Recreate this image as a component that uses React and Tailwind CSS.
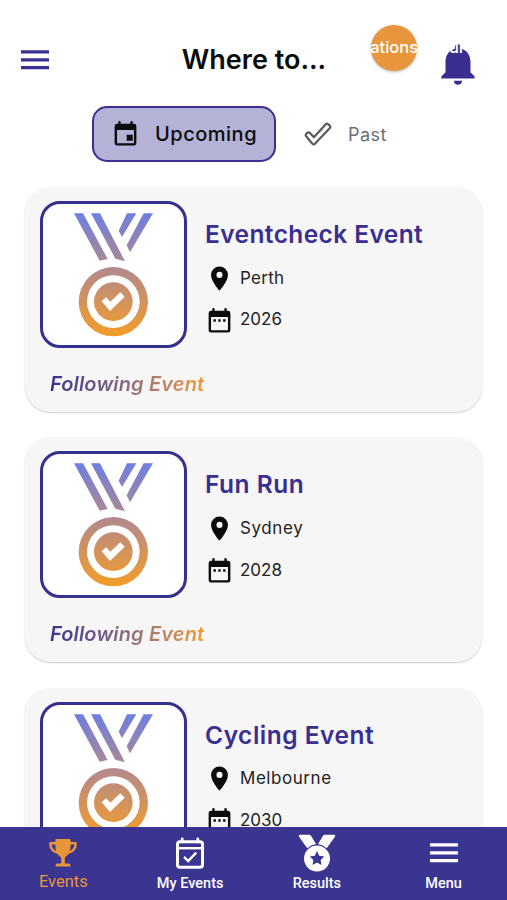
import React from 'react';

const events = [
  { id: 1, name: 'Eventcheck Event', city: 'Perth', year: '2026', nameClass: 'tracking-[0.4px]', cityClass: 'tracking-[0.3px]' },
  { id: 2, name: 'Fun Run', city: 'Sydney', year: '2028', nameClass: 'tracking-[0.5px]', cityClass: 'tracking-[0.6px]' },
  { id: 3, name: 'Cycling Event', city: 'Melbourne', year: '2030', nameClass: 'tracking-[0.5px]', cityClass: 'tracking-[0.55px]' },
];

const MenuIcon = ({ className }) => (
  <svg viewBox="0 0 28 20" className={className} fill="currentColor">
    <path d="M0 .3h28v3.300H0zM0 8.200h28v3.300H0zM0 16h28v3.300H0z" />
  </svg>
);

const CalendarIcon = ({ className, children }) => (
  <svg viewBox="0 0 24 24" className={className} fill="currentColor">
    <path fillRule="evenodd" d="M19 4h-1V2.6a.8.8 0 0 0-2 0V4H8V2.6a.8.8 0 0 0-2 0V4H5a2 2 0 0 0-2 2v14a2 2 0 0 0 2 2h14a2 2 0 0 0 2-2V6a2 2 0 0 0-2-2zm0 15.5a.5.5 0 0 1-.5.5h-13a.5.5 0 0 1-.5-.5V9h14z" />
    {children}
  </svg>
);

const CalendarCheckIcon = ({ className }) => (
  <svg viewBox="0 0 28 32" className={className} fill="none" stroke="currentColor">
    <rect x="1.5" y="4.700" width="25" height="25.500" rx="2.500" strokeWidth="3" />
    <path strokeWidth="2.400" d="M1.300 11.200h25.400" />
    <path strokeWidth="2.800" strokeLinecap="round" d="M6.200 1.800V5M21.800 1.800V5" />
    <path strokeWidth="2.400" d="M8 19.800l4.200 4.200 8-8.300" />
  </svg>
);

const PinIcon = ({ className }) => (
  <svg viewBox="0 0 24 24" className={className} fill="currentColor">
    <path d="M12 2a7 7 0 0 0-7 7c0 5.250 7 13 7 13s7-7.750 7-13a7 7 0 0 0-7-7zm0 9.500a2.500 2.500 0 1 1 0-5 2.500 2.500 0 0 1 0 5z" />
  </svg>
);

const BellIcon = ({ className }) => (
  <svg viewBox="0 0 24 24" className={className} fill="currentColor">
    <path d="M12 22c1.100 0 2-.9 2-2h-4c0 1.100.9 2 2 2zm6-6v-5c0-3.070-1.640-5.640-4.500-6.320V4a1.500 1.500 0 0 0-3 0v.68C7.630 5.360 6 7.920 6 11v5l-2 2v1h16v-1l-2-2z" />
  </svg>
);

const TrophyIcon = ({ className }) => (
  <svg viewBox="0 0 28 28" className={className} fill="none" stroke="currentColor">
    <path strokeWidth="2.500" strokeLinejoin="round" d="M7.500 4.200H1.500V6c0 3.700 3.200 7.300 8.500 8M20.500 4.200h6V6c0 3.700-3.200 7.300-8.500 8" />
    <path fill="currentColor" stroke="none" d="M7.800 0h12.400q1.400 0 1.400 1.400V7c0 5-2.300 9.500-5.800 11.400V24.500h3.800q1.800 0 1.800 1.500v1.500H6.600V26q0-1.500 1.800-1.500h3.800v-6.100C8.700 16.500 6.400 12 6.400 7V1.400Q6.400 0 7.800 0z" />
  </svg>
);

const ResultsIcon = ({ className }) => (
  <svg viewBox="0 0 38 38" className={className} fill="currentColor">
    <path d="M2 .8h9.200q1.200 0 1.800 1l5 8.200a15 15 0 0 0-8.700 4.300L.9 2.500Q.1.800 2 .8zM36 .8h-9.200q-1.200 0-1.800 1l-5 8.200a15 15 0 0 1 8.700 4.300l8.400-11.800Q37.900.8 36 .8z" />
    <path fillRule="evenodd" d="M19 11.600a13 13 0 1 0 0 26 13 13 0 0 0 0-26zM19 17l2.200 4.700 5.100.7-3.700 3.500.9 5.100-4.500-2.500-4.500 2.500.9-5.100-3.700-3.500 5.100-.7z" />
  </svg>
);

const MedalLogo = () => (
  <svg viewBox="0 0 300 420" className="w-[100px] h-[140px] mt-px ml-[2px]">
    <defs>
      <linearGradient id="medal" gradientUnits="userSpaceOnUse" x1="0" y1="25" x2="0" y2="394">
        <stop offset="0" stopColor="#6d7fdf" />
        <stop offset="0.45" stopColor="#b3898d" />
        <stop offset="1" stopColor="#f39d28" />
      </linearGradient>
    </defs>
    <g fill="url(#medal)">
      <path d="M27 25h27l74 137-24 5zM78 25h27l75 144-29-8zM186 25h28l-43 71-10-19zM236 25h28l-69 117-10-21z" />
      <path fillRule="evenodd" d="M145 186a104 104 0 1 0 0 208 104 104 0 0 0 0-208zm0 25a79 79 0 1 1 0 158 79 79 0 0 1 0-158z" />
      <path fillRule="evenodd" d="M145 232a58 58 0 1 0 0 116 58 58 0 0 0 0-116zM110 289l13-12 13 13 30-28 13 13-44 43z" />
    </g>
  </svg>
);

const EventCard = ({ event }) => (
  <div className="h-[225px] shrink-0 rounded-[26px] bg-[#f6f6f6] shadow-[0_1px_2px_rgba(0,0,0,0.2)] px-[15px] pt-[14px]">
    <div className="flex">
      <div className="w-[147px] h-[147px] shrink-0 bg-white border-3 border-[#352f8f] rounded-[20px] flex justify-center">
        <MedalLogo />
      </div>
      <div className="ml-[18px] pt-[15px]">
        <h2 className={`text-[24.5px] leading-9 font-semibold text-[#3a2f91] whitespace-nowrap ${event.nameClass}`}>{event.name}</h2>
        <div className="mt-[12px] flex items-center h-7">
          <PinIcon className="w-[29px] h-[29px] text-[#0b0d0d]" />
          <span className={`ml-[6px] mt-px text-[17px] text-[#222] ${event.cityClass}`}>{event.city}</span>
        </div>
        <div className="mt-[14px] flex items-center h-7">
          <CalendarIcon className="w-[29px] h-[29px] text-[#0b0d0d]">
            <path d="M7 11h2v2H7zM11 11h2v2h-2zM15 11h2v2h-2z" />
          </CalendarIcon>
          <span className="ml-[6px] text-[17px] text-[#222]">{event.year}</span>
        </div>
      </div>
    </div>
    <p className="mt-[21px] ml-[10px] w-fit text-[20px] leading-[30px] tracking-[0.15px] font-semibold italic whitespace-nowrap bg-linear-to-r from-[#3a2f91] to-[#f09a30] bg-clip-text text-transparent">
      Following Event
    </p>
  </div>
);

const NavItem = ({ icon, label, active }) => (
  <div className={`flex-1 flex flex-col items-center pt-[7px] font-[Roboto] ${active ? 'text-[#e8953a]' : 'text-white'}`}>
    <div className="h-[38px] flex items-center justify-center">{icon}</div>
    <span className={active ? 'text-[16.5px] leading-5' : 'mt-[2px] text-[14.5px] leading-5 font-medium'}>{label}</span>
  </div>
);

const App = () => {
  return (
    <div className="h-[900px] flex flex-col overflow-hidden bg-white font-[Inter,sans-serif]">
      {/* Header */}
      <header className="relative h-[106px] shrink-0 flex items-center justify-between pl-[21px] pr-[24px] pt-[14px]">
        <MenuIcon className="w-7 h-5 text-[#3a2f91]" />
        <BellIcon className="w-[50px] h-[50px] mt-[8px] text-[#3a2f91]" />
        <h1 className="absolute inset-x-0 top-[40px] pl-px text-center text-[27px] leading-10 font-semibold text-[#0b0d0d]">Where to...</h1>
        <div className="absolute left-[371px] top-[25px] w-[46px] h-[46px] rounded-full bg-[#e8963c] shadow-[0_1px_3px_rgba(0,0,0,0.3)] flex items-center justify-center">
          <span className="-ml-[5px] -mt-px text-white text-[16.5px] font-medium whitespace-nowrap [word-spacing:7px]">Notifications Tour</span>
        </div>
      </header>

      {/* Tabs */}
      <div className="h-14 shrink-0 flex pl-[92px]">
        <button className="w-[184px] h-14 rounded-[15px] border-[2.5px] border-[#3a2f91] bg-[#b4b2d6] flex items-center pl-[17px]">
          <CalendarIcon className="w-[29px] h-[29px] -mt-[2px] text-[#0b0d0d]">
            <path d="M13 13h5v5h-5z" />
          </CalendarIcon>
          <span className="ml-[15px] text-[20px] tracking-[0.5px] font-medium text-[#0b0d0d]">Upcoming</span>
        </button>
        <button className="ml-[28px] flex items-center text-[#697075]">
          <svg viewBox="0 0 28 24" className="w-7 h-6" fill="none" stroke="#555c61" strokeWidth="2.2">
            <path strokeLinejoin="round" d="M2.200 14.200q-1-1.200 0-2.300l1.300-1.200q1.200-.9 2.400.2l4 4.400L21.800 2.200q1.200-1 2.500.1l1.500 1.500q1 1.200-.1 2.400L10.900 21.800q-1.300 1.100-2.500 0z" />
          </svg>
          <span className="ml-4 text-[18px] tracking-[0.5px]">Past</span>
        </button>
      </div>

      {/* Event list */}
      <main className="flex-1 min-h-0 overflow-hidden flex flex-col gap-[25.3px] px-[25px] pt-[25px]">
        {events.map((event) => (
          <EventCard key={event.id} event={event} />
        ))}
      </main>

      {/* Bottom nav */}
      <nav className="h-[73px] shrink-0 bg-[#3a3591] flex">
        <NavItem active label="Events" icon={<TrophyIcon className="w-7 h-7" />} />
        <NavItem label="My Events" icon={<CalendarCheckIcon className="w-7 h-8" />} />
        <NavItem label="Results" icon={<ResultsIcon className="w-[38px] h-[38px]" />} />
        <NavItem label="Menu" icon={<MenuIcon className="w-7 h-5" />} />
      </nav>
    </div>
  );
};

export default App;
